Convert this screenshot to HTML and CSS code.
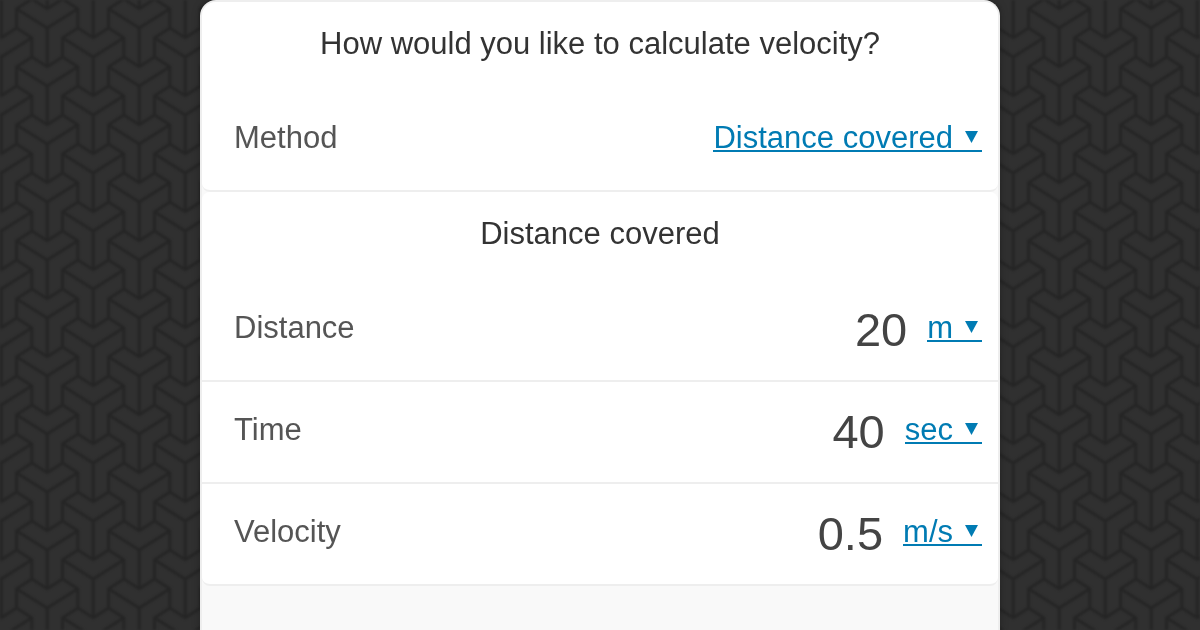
FILE: index.html
```html
<!DOCTYPE html>
<html lang="en">
<head>
    <meta charset="UTF-8">
    <meta name="viewport" content="width=device-width, initial-scale=1.0">
    <title>Velocity Calculator</title>
    <link rel="stylesheet" href="styles.css">
</head>
<body>

    <!-- Background pattern -->
    <svg class="backdrop" aria-hidden="true">
        <defs>
            <g id="block">
                <path d="M0 0 L-15.33 -9.67 L-30.67 0 L0 19.33 L30.67 0 L15.33 -9.67 Z M0 19.33 V58 M-30.67 0 V19.33 M30.67 0 V19.33"/>
            </g>
            <pattern id="cubes" width="92" height="58" patternUnits="userSpaceOnUse">
                <use href="#block" x="47.2" y="-49.3"/>
                <use href="#block" x="47.2" y="8.7"/>
                <use href="#block" x="47.2" y="66.7"/>
                <use href="#block" x="1.2" y="-20.3"/>
                <use href="#block" x="1.2" y="37.7"/>
                <use href="#block" x="93.2" y="-20.3"/>
                <use href="#block" x="93.2" y="37.7"/>
            </pattern>
        </defs>
        <rect width="100%" height="100%" fill="url(#cubes)" stroke="none"/>
    </svg>

    <main class="calculator">

        <!-- Method -->
        <section class="panel">
            <h2>How would you like to calculate velocity?</h2>
            <div class="row">
                <label for="method">Method</label>
                <span class="picker">
                    <select id="method">
                        <option selected>Distance covered</option>
                        <option>Acceleration</option>
                        <option>Average velocity</option>
                    </select>
                    <svg class="arrow" viewBox="0 0 13 12" aria-hidden="true"><path d="M0 0 H13 L6.5 12 Z"/></svg>
                </span>
            </div>
        </section>

        <!-- Distance covered -->
        <section class="panel">
            <h2>Distance covered</h2>
            <div class="row">
                <label for="distance">Distance</label>
                <input type="text" id="distance" value="20" inputmode="decimal">
                <span class="picker">
                    <select aria-label="Distance unit">
                        <option selected>m</option>
                        <option>km</option>
                        <option>ft</option>
                        <option>mi</option>
                    </select>
                    <svg class="arrow" viewBox="0 0 13 12" aria-hidden="true"><path d="M0 0 H13 L6.5 12 Z"/></svg>
                </span>
            </div>
            <div class="row">
                <label for="time">Time</label>
                <input type="text" id="time" value="40" inputmode="decimal">
                <span class="picker">
                    <select aria-label="Time unit">
                        <option selected>sec</option>
                        <option>min</option>
                        <option>hrs</option>
                    </select>
                    <svg class="arrow" viewBox="0 0 13 12" aria-hidden="true"><path d="M0 0 H13 L6.5 12 Z"/></svg>
                </span>
            </div>
            <div class="row">
                <label for="velocity">Velocity</label>
                <input type="text" id="velocity" value="0.5" inputmode="decimal">
                <span class="picker">
                    <select aria-label="Velocity unit">
                        <option selected>m/s</option>
                        <option>km/h</option>
                        <option>mph</option>
                    </select>
                    <svg class="arrow" viewBox="0 0 13 12" aria-hidden="true"><path d="M0 0 H13 L6.5 12 Z"/></svg>
                </span>
            </div>
        </section>

    </main>

</body>
</html>
```

FILE: styles.css
```css
* {
    box-sizing: border-box;
}

body {
    margin: 0;
    background-color: #303030;
    font-family: "Liberation Sans", Helvetica, Arial, sans-serif;
    font-size: 31px;
    color: #333;
}

/* Background pattern */
.backdrop {
    position: fixed;
    inset: 0;
    z-index: -1;
    width: 100%;
    height: 100%;
    fill: none;
    stroke: #252525;
    stroke-width: 3;
    stroke-linejoin: round;
    filter: blur(1px);
}

/* Calculator */
.calculator {
    max-width: 800px;
    min-height: 100vh;
    margin: 0 auto;
    background-color: #f9f9f9;
    border: 2px solid #eee;
    border-bottom: none;
    border-radius: 16px 16px 0 0;
    box-shadow: 0 0 8px rgba(0, 0, 0, 0.25);
    overflow: hidden;
}

.panel {
    background-color: #fff;
    border-bottom: 2px solid #eee;
    border-radius: 8px;
}

.panel h2 {
    margin: 0;
    padding: 24px 16px 28px;
    font-size: 31px;
    font-weight: normal;
    line-height: 36px;
    text-align: center;
}

.row {
    display: flex;
    align-items: center;
    height: 100px;
    padding: 0 16px 4px 32px;
}

.row + .row {
    height: 102px;
    border-top: 2px solid #eee;
}

.row label {
    flex: 1;
    line-height: 36px;
    color: #555;
}

.row input {
    width: 200px;
    margin-right: 20px;
    padding: 4px 0 0;
    border: none;
    outline: none;
    background: none;
    font-family: inherit;
    font-size: 47px;
    line-height: 56px;
    text-align: right;
    color: #444;
}

/* Unit and method drop-downs, the underline runs beneath the arrow too */
.picker {
    display: flex;
    align-items: center;
    gap: 12px;
    height: 36px;
    padding-right: 4px;
    background: linear-gradient(#007bb3, #007bb3) 0 30px / 100% 2px no-repeat;
}

.picker select {
    appearance: none;
    field-sizing: content;
    margin: 0;
    padding: 0;
    border: none;
    outline: none;
    background: none;
    font-family: inherit;
    font-size: 31px;
    line-height: 36px;
    color: #007bb3;
    cursor: pointer;
}

.arrow {
    width: 13px;
    height: 12px;
    margin-bottom: 2px;
    fill: #007bb3;
}

@media screen and (max-width: 600px) {
    .row input {
        width: 120px;
    }
}
```
